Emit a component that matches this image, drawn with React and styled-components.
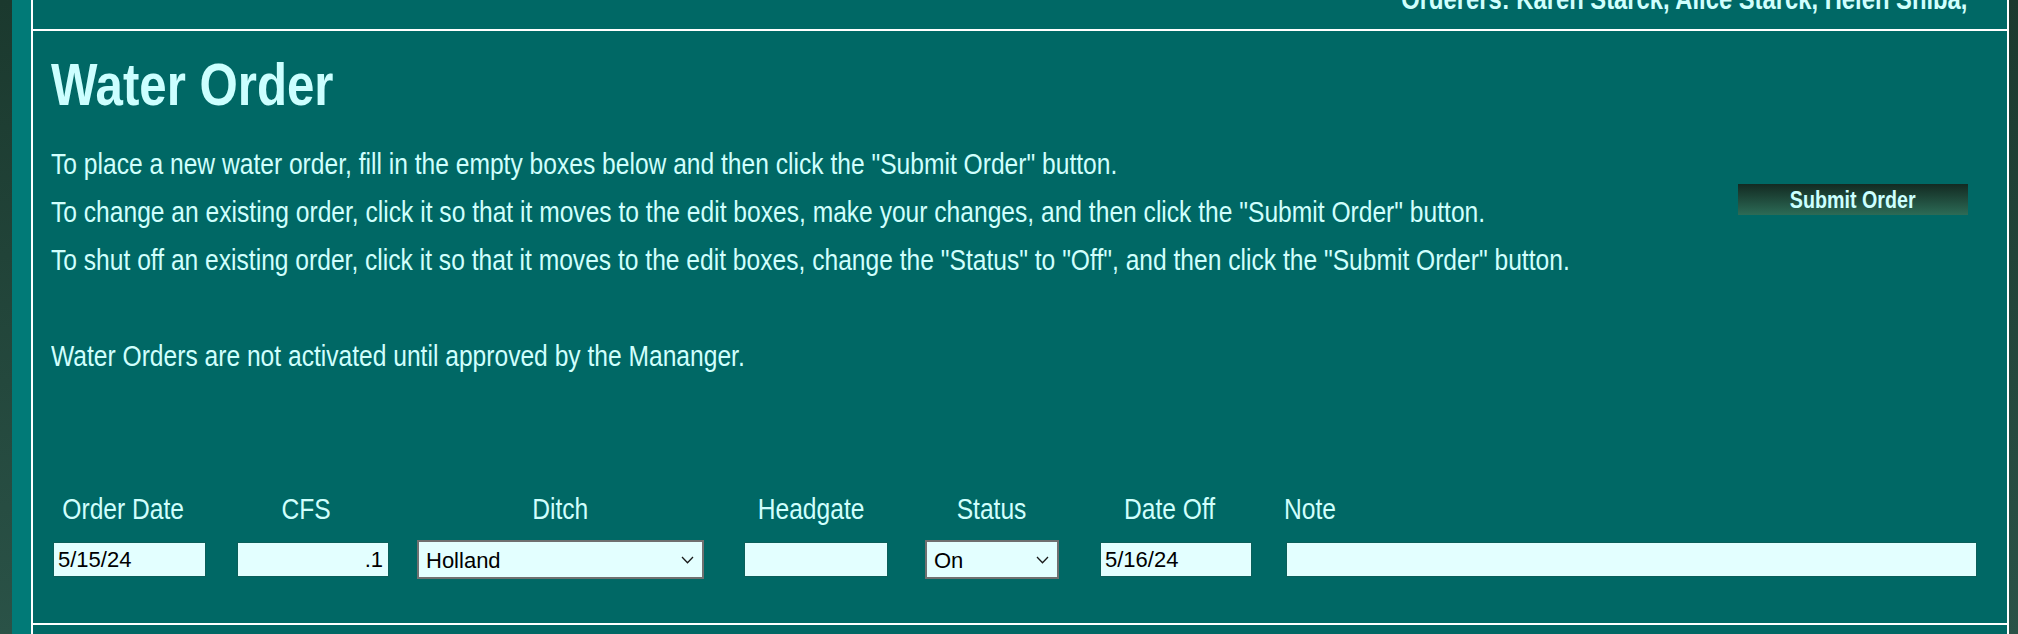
import React from 'react'
import styled, { createGlobalStyle } from "styled-components";

const GlobalStyle = createGlobalStyle`
  html, body {
    margin: 0;
    padding: 0;
    height: 100%;
    overflow: hidden;
  }
  body {
    font-family: "Liberation Sans", Arial, sans-serif;
    background: #1c3a2f;
  }
`

// the page text is a narrow Helvetica; no narrow face here, so squeeze Liberation Sans
const NARROW = 0.82

const fields = [
  { label: "Order Date", value: "5/15/24", width: 153, ml: 0, shift: 12 },
  { label: "CFS", value: ".1", width: 152, ml: 31, shift: 14, right: true },
  { label: "Ditch", value: "Holland", width: 287, ml: 28, select: ["Holland"] },
  { label: "Headgate", value: "", width: 144, ml: 40, shift: 10 },
  { label: "Status", value: "On", width: 134, ml: 37, select: ["On", "Off"] },
  { label: "Date Off", value: "5/16/24", width: 152, ml: 41, shift: 12 },
  { label: "Note", value: "", width: 691, ml: 34, left: true },
]

const Chevron = () => (
  <ChevronIcon width="13" height="8" viewBox="0 0 13 8">
    <path d="M1 1 L6.5 6.8 L12 1" fill="none" stroke="#1a1a1a" strokeWidth="1.3" />
  </ChevronIcon>
)

const WaterOrder = () => {
  return (
    <Page>
      <GlobalStyle />
      <DarkEdge $w={12} />
      <TealStrip />
      <Main>
        <HeaderRow>
          <Orderers>Orderers: Karen Starck, Alice Starck, Helen Shiba,</Orderers>
        </HeaderRow>
        <Section>
          <Title>Water Order</Title>
          <IntroRow>
            <Instructions>
              To place a new water order, fill in the empty boxes below and then click the "Submit Order" button.<br />
              To change an existing order, click it so that it moves to the edit boxes, make your changes, and then click the "Submit Order" button.<br />
              To shut off an existing order, click it so that it moves to the edit boxes, change the "Status" to "Off", and then click the "Submit Order" button.<br />
              <br />
              Water Orders are not activated until approved by the Mananger.
            </Instructions>
            <SubmitButton type="button"><ButtonText>Submit Order</ButtonText></SubmitButton>
          </IntroRow>
          <FormGrid>
            {fields.map((f) => (
              <Field key={f.label} $w={f.width} $ml={f.ml}>
                <LabelCell $shift={f.shift || 0} $left={f.left}>
                  <LabelText $left={f.left}>{f.label}</LabelText>
                </LabelCell>
                {f.select ? (
                  <SelectWrap>
                    <Select defaultValue={f.value}>
                      {f.select.map((o) => <option key={o}>{o}</option>)}
                    </Select>
                    <Chevron />
                  </SelectWrap>
                ) : (
                  <TextBox defaultValue={f.value} $right={f.right} />
                )}
              </Field>
            ))}
          </FormGrid>
        </Section>
        <Filler />
      </Main>
      <DarkEdge $w={9} />
    </Page>
  )
}

const Page = styled.div`
  display: flex;
  height: 100vh;
  background: linear-gradient(#1b392e, #2a5247);
`
const DarkEdge = styled.div`
  width: ${p => p.$w}px;
  flex: none;
`
const TealStrip = styled.div`
  width: 19px;
  flex: none;
  background: #017a77;
`
const Main = styled.div`
  flex: 1;
  min-width: 0;
  display: flex;
  flex-direction: column;
  background: #006865;
  border-left: 2px solid #fff;
  border-right: 2px solid #fff;
  color: #d0fffd;
`
const HeaderRow = styled.div`
  height: 29px;
  display: flex;
  justify-content: flex-end;
  align-items: flex-end;
  padding-right: 40px;
  border-bottom: 2px solid #fff;
`
const Orderers = styled.span`
  display: inline-block;
  font-weight: bold;
  font-size: 29px;
  line-height: 29px;
  margin-bottom: 15px;
  white-space: nowrap;
  transform: scaleX(${NARROW});
  transform-origin: right center;
`
const Section = styled.section`
  padding: 24px 0 44px 0;
  border-bottom: 2px solid #fff;
`
const Title = styled.h1`
  margin: 0 0 0 18px;
  font-weight: bold;
  font-size: 60px;
  line-height: 60px;
  color: #ccffff;
  transform: scaleX(${NARROW});
  transform-origin: left center;
`
const IntroRow = styled.div`
  display: flex;
  justify-content: space-between;
  align-items: flex-start;
  margin-top: 25px;
  padding: 0 39px 0 18px;
`
const Instructions = styled.p`
  flex: 1;
  min-width: 0;
  margin: 0;
  font-size: 30px;
  line-height: 48px;
  white-space: nowrap;
  transform: scaleX(${NARROW});
  transform-origin: left top;
`
const SubmitButton = styled.button`
  flex: none;
  width: 230px;
  height: 31px;
  margin-top: 44px;
  border: none;
  padding: 0;
  background: linear-gradient(#132a22, #2c6b56);
  color: #ccffff;
  cursor: pointer;
`
const ButtonText = styled.span`
  display: inline-block;
  font-family: "Liberation Sans", Arial, sans-serif;
  font-weight: bold;
  font-size: 24px;
  transform: scaleX(${NARROW});
`
const FormGrid = styled.div`
  display: flex;
  align-items: flex-end;
  margin-top: 115px;
  padding-left: 20px;
`
const Field = styled.div`
  width: ${p => p.$w}px;
  margin-left: ${p => p.$ml}px;
  display: flex;
  flex-direction: column;
  flex: none;
`
const LabelCell = styled.div`
  height: 45px;
  display: flex;
  align-items: flex-start;
  justify-content: ${p => p.$left ? 'flex-start' : 'center'};
  padding-right: ${p => p.$shift}px;
  margin-left: ${p => p.$left ? -2 : 0}px;
`
const LabelText = styled.span`
  display: inline-block;
  font-size: 30px;
  line-height: 28px;
  white-space: nowrap;
  transform: scaleX(${NARROW});
  transform-origin: ${p => p.$left ? 'left' : 'center'} center;
`
const TextBox = styled.input`
  box-sizing: border-box;
  width: 100%;
  height: 35px;
  margin: 2px 0;
  border: 1px solid #0b5f5a;
  background: #e3ffff;
  font-family: "Liberation Sans", Arial, sans-serif;
  font-size: 22px;
  color: #000;
  padding: 0 5px 0 4px;
  text-align: ${p => p.$right ? 'right' : 'left'};
  outline: none;
`
const SelectWrap = styled.div`
  position: relative;
  width: 100%;
  height: 39px;
`
const Select = styled.select`
  appearance: none;
  -webkit-appearance: none;
  box-sizing: border-box;
  width: 100%;
  height: 39px;
  border: 2px solid #707070;
  border-radius: 0;
  background: #e3ffff;
  font-family: "Liberation Sans", Arial, sans-serif;
  font-size: 22px;
  color: #000;
  padding: 2px 0 0 7px;
  outline: none;
`
const ChevronIcon = styled.svg`
  position: absolute;
  right: 10px;
  top: 16px;
  pointer-events: none;
`
const Filler = styled.div`
  flex: 1;
`

export default WaterOrder;
